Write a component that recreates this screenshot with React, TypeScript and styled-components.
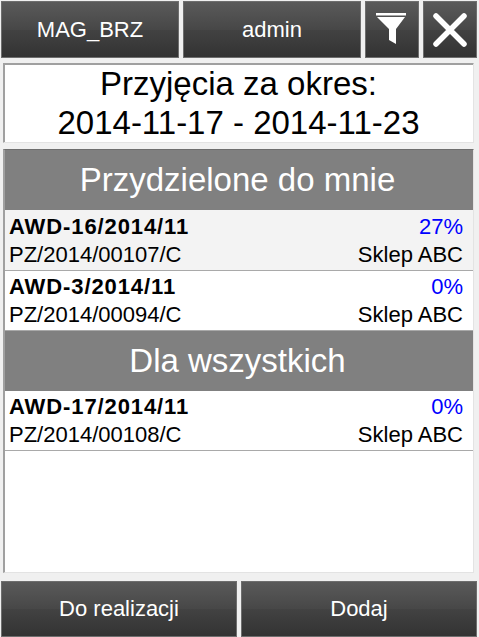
import React from "react";
import styled, { createGlobalStyle } from "styled-components";

const GlobalStyle = createGlobalStyle`
  html, body {
    margin: 0;
    padding: 0;
    background: #f0f0f0;
    font-family: "Liberation Sans", Arial, sans-serif;
  }
`;

const assigned = [
  { code: "AWD-16/2014/11", percent: "27%", doc: "PZ/2014/00107/C", shop: "Sklep ABC", selected: true },
  { code: "AWD-3/2014/11", percent: "0%", doc: "PZ/2014/00094/C", shop: "Sklep ABC" },
];

const forAll = [{ code: "AWD-17/2014/11", percent: "0%", doc: "PZ/2014/00108/C", shop: "Sklep ABC" }];

function Row(props: any) {
  const { code, percent, doc, shop, selected } = props;
  return (
    <ListRow $selected={selected}>
      <Code>{code}</Code>
      <Percent>{percent}</Percent>
      <Doc>{doc}</Doc>
      <Doc>{shop}</Doc>
    </ListRow>
  );
}

export default function App() {
  return (
    <Page>
      <GlobalStyle />
      <TopBar>
        <DarkButton>MAG_BRZ</DarkButton>
        <DarkButton>admin</DarkButton>
        <DarkButton>
          <svg width="34" height="44" viewBox="0 0 34 44">
            <rect x="1" y="5" width="30" height="2.5" fill="#fff" />
            <path d="M2 9 H30 L21 21 V36 L14 32 V21 Z" fill="#fff" />
          </svg>
        </DarkButton>
        <DarkButton>
          <svg width="36" height="36" viewBox="0 0 36 36">
            <path d="M4 4 L32 32 M32 4 L4 32" stroke="#fff" strokeWidth="5.5" strokeLinecap="round" />
          </svg>
        </DarkButton>
      </TopBar>
      <PeriodPanel>
        <div>Przyjęcia za okres:</div>
        <div>2014-11-17 - 2014-11-23</div>
      </PeriodPanel>
      <ListPanel>
        <SectionHeader>Przydzielone do mnie</SectionHeader>
        {assigned.map((item) => (
          <Row key={item.code} {...item} />
        ))}
        <SectionHeader $short>Dla wszystkich</SectionHeader>
        {forAll.map((item) => (
          <Row key={item.code} {...item} />
        ))}
      </ListPanel>
      <BottomBar>
        <DarkButton>Do realizacji</DarkButton>
        <DarkButton>Dodaj</DarkButton>
      </BottomBar>
    </Page>
  );
}

const Page = styled.div`
  width: 479px;
  height: 637px;
  overflow: hidden;
  box-sizing: border-box;
  padding: 1px 1px 0;
  display: flex;
  flex-direction: column;
`;

const TopBar = styled.div`
  display: grid;
  grid-template-columns: 178px 178px 54px 54px;
  grid-auto-rows: 57px;
  column-gap: 4px;
`;

const BottomBar = styled.div`
  display: grid;
  grid-template-columns: 236px 236px;
  column-gap: 4px;
  height: 56px;
  margin-top: 8px;
`;

const DarkButton = styled.div`
  box-sizing: border-box;
  border: 1px solid #6e6e6e;
  background: linear-gradient(#5a5a5a 0%, #474747 50%, #424242 51%, #333333 100%);
  color: #fff;
  font-size: 22px;
  display: flex;
  align-items: center;
  justify-content: center;
`;

const PeriodPanel = styled.div`
  box-sizing: border-box;
  width: 471px;
  height: 80px;
  margin: 5px 0 0 2px;
  border: 1px solid #e3e3e3;
  border-top: 1px solid #a0a0a0;
  border-left: 1px solid #a0a0a0;
  box-shadow: inset 1px 1px 0 #a0a0a0;
  background: #fff;
  color: #000;
  font-size: 33px;
  line-height: 39px;
  text-align: center;
`;

const ListPanel = styled.div`
  box-sizing: border-box;
  width: 471px;
  height: 425px;
  margin: 6px 0 0 2px;
  border: 1px solid #e3e3e3;
  border-top: 1px solid #6e6e6e;
  border-left: 2px solid #a0a0a0;
  background: #fff;
`;

const SectionHeader = styled.div<{ $short?: boolean }>`
  box-sizing: border-box;
  height: ${(p) => (p.$short ? 59.5 : 60)}px;
  padding-right: 3px;
  background: #808080;
  color: #fff;
  font-size: 33px;
  display: flex;
  align-items: center;
  justify-content: center;
`;

const ListRow = styled.div<{ $selected?: boolean }>`
  box-sizing: border-box;
  height: 60.5px;
  padding: 2.5px 10px 0 4px;
  border-bottom: 1px solid #a9a9a9;
  background: ${(p) => (p.$selected ? "#f3f3f3" : "#fff")};
  display: grid;
  grid-template-columns: 1fr auto;
  grid-auto-rows: 28px;
  align-items: center;
`;

const Code = styled.div`
  font-size: 22px;
  font-weight: bold;
  letter-spacing: 0.9px;
  color: #000;
`;

const Percent = styled.div`
  font-size: 22px;
  color: #0000ff;
  text-align: right;
`;

const Doc = styled.div`
  font-size: 22px;
  color: #000;
`;
